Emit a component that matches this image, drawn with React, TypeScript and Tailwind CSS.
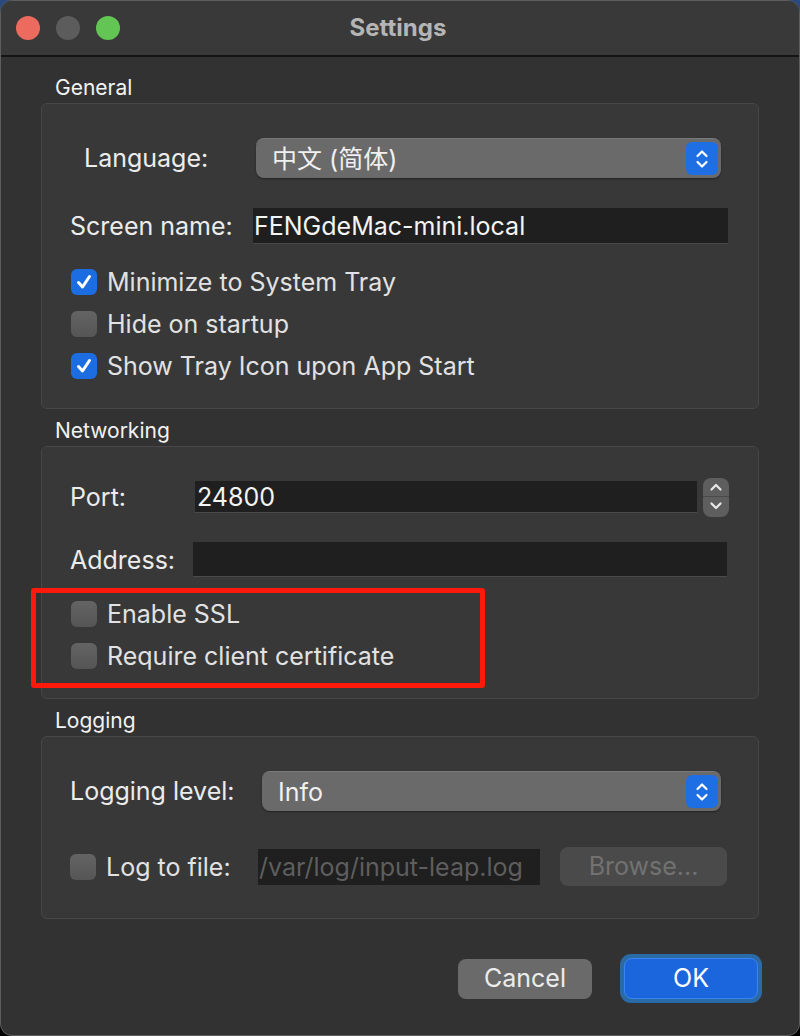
import React from "react";

const font = { fontFamily: 'Inter, "Noto Sans CJK SC", "Liberation Sans", sans-serif' };

function Chevrons({ color = "white" }: { color?: string }) {
  return (
    <svg width="14" height="22" viewBox="0 0 14 22" fill="none">
      <polyline points="2.5,8 7,3.5 11.5,8" stroke={color} strokeWidth="2.2" strokeLinecap="round" strokeLinejoin="round" />
      <polyline points="2.5,14 7,18.5 11.5,14" stroke={color} strokeWidth="2.2" strokeLinecap="round" strokeLinejoin="round" />
    </svg>
  );
}

function Select({ value, width }: { value: string; width: string }) {
  return (
    <div className={`${width} h-[40px] rounded-[8px] bg-[#6a6a6a] border-t border-[#7a7a7a] shadow-[0_1px_2px_rgba(0,0,0,0.4)] flex items-center justify-between pl-[16px] pr-[3px]`}>
      <span className="text-[25px] text-[#f0f0f0] pt-[2px]">{value}</span>
      <div className="w-[32px] h-[33px] rounded-[6px] bg-[#1e6fe3] flex items-center justify-center">
        <Chevrons />
      </div>
    </div>
  );
}

function Check({ checked }: { checked?: boolean }) {
  return checked ? (
    <div className="w-[26px] h-[26px] rounded-[6px] bg-[#1d6de2] flex items-center justify-center shrink-0">
      <svg width="18" height="18" viewBox="0 0 18 18" fill="none">
        <polyline points="3.5,9.5 7.5,14 14.5,3.5" stroke="white" strokeWidth="3" strokeLinecap="round" strokeLinejoin="round" />
      </svg>
    </div>
  ) : (
    <div className="w-[26px] h-[26px] rounded-[6px] bg-gradient-to-b from-[#646464] to-[#555555] shrink-0" />
  );
}

function CheckRow({ label, checked }: { label: string; checked?: boolean }) {
  return (
    <div className="h-[42px] flex items-center gap-[10px] pl-[29px]">
      <Check checked={checked} />
      <span className="text-[25px] text-[#e2e2e2] pt-[2px]">{label}</span>
    </div>
  );
}

function GroupTitle({ children }: { children: React.ReactNode }) {
  return <div className="h-[30px] pl-[14px] flex items-center text-[21px] text-[#f2f2f2]">{children}</div>;
}

export default function App() {
  return (
    <div className="w-[800px] h-[1036px] bg-gradient-to-b from-[#2b4a82] via-[#101010] to-black" style={font}>
      <div className="w-full h-full rounded-[12px] border border-[#5e5e5e] overflow-hidden flex flex-col bg-[#323232]">
        {/* title bar */}
        <div className="h-[56px] shrink-0 bg-[#393939] border-b-2 border-[#141414] flex items-center">
          <div className="flex items-center gap-[16px] pl-[15px]">
            <div className="w-[24px] h-[24px] rounded-full bg-[#ec6b5e]" />
            <div className="w-[24px] h-[24px] rounded-full bg-[#5c5c5c]" />
            <div className="w-[24px] h-[24px] rounded-full bg-[#62c554]" />
          </div>
          <div className="flex-1 text-center pr-[123px] text-[24px] font-bold text-[#b5b5b5]">Settings</div>
        </div>

        {/* body */}
        <div className="flex-1 px-[40px] pt-[16px]">
          <GroupTitle>General</GroupTitle>
          <div className="h-[306px] rounded-[6px] border border-[#474747] bg-[#383838] pt-[34px]">
            <div className="flex items-center h-[40px]">
              <span className="w-[214px] pl-[42px] text-[25px] text-[#ececec] pt-[2px]">Language:</span>
              <Select value="中文 (简体)" width="w-[465px]" />
            </div>
            <div className="flex items-center h-[36px] mt-[30px]">
              <span className="w-[211px] pl-[28px] text-[25px] text-[#ececec] pt-[2px]">Screen name:</span>
              <div className="w-[475px] h-[36px] bg-[#1f1f1f] border-b border-[#4a4a4a] flex items-center pl-[1px] pt-[2px] text-[25px] text-[#f4f4f4]">
                FENGdeMac-mini.local
              </div>
            </div>
            <div className="mt-[17px]">
              <CheckRow label="Minimize to System Tray" checked />
              <CheckRow label="Hide on startup" />
              <CheckRow label="Show Tray Icon upon App Start" checked />
            </div>
          </div>

          <div className="mt-[7px]">
            <GroupTitle>Networking</GroupTitle>
          </div>
          <div className="relative h-[253px] rounded-[6px] border border-[#474747] bg-[#383838] pt-[30px]">
            <div className="flex items-center h-[40px]">
              <span className="w-[153px] pl-[28px] text-[25px] text-[#ececec] pt-[2px]">Port:</span>
              <div className="w-[502px] h-[32px] bg-[#1f1f1f] border-b border-[#4a4a4a] flex items-center pl-[2px] pt-[2px] text-[25px] text-[#f4f4f4]">
                24800
              </div>
              <div className="ml-[6px] w-[26px] h-[39px] rounded-[8px] bg-[#5e5e5e] flex flex-col items-center">
                <div className="h-[19px] w-full flex items-center justify-center border-b border-[#4a4a4a]">
                  <svg width="14" height="10" viewBox="0 0 14 10" fill="none"><polyline points="2.5,7.5 7,3 11.5,7.5" stroke="#e8e8e8" strokeWidth="2.2" strokeLinecap="round" strokeLinejoin="round" /></svg>
                </div>
                <div className="h-[19px] w-full flex items-center justify-center">
                  <svg width="14" height="10" viewBox="0 0 14 10" fill="none"><polyline points="2.5,2.5 7,7 11.5,2.5" stroke="#e8e8e8" strokeWidth="2.2" strokeLinecap="round" strokeLinejoin="round" /></svg>
                </div>
              </div>
            </div>
            <div className="flex items-center h-[35px] mt-[25px]">
              <span className="w-[151px] pl-[28px] text-[25px] text-[#ececec] pt-[2px]">Address:</span>
              <div className="w-[534px] h-[35px] bg-[#1f1f1f] border-b border-[#4a4a4a]" />
            </div>
            <div className="mt-[16px]">
              <CheckRow label="Enable SSL" />
              <CheckRow label="Require client certificate" />
            </div>
            <div className="absolute left-[-11px] top-[141px] w-[454px] h-[100px] border-[5px] border-[#fd1a0c] rounded-[3px] pointer-events-none" />
          </div>

          <div className="mt-[7px]">
            <GroupTitle>Logging</GroupTitle>
          </div>
          <div className="h-[183px] rounded-[6px] border border-[#474747] bg-[#383838] pt-[34px]">
            <div className="flex items-center h-[40px]">
              <span className="w-[220px] pl-[28px] text-[25px] text-[#ececec] pt-[2px]">Logging level:</span>
              <Select value="Info" width="w-[459px]" />
            </div>
            <div className="flex items-center mt-[36px] h-[39px]">
              <div className="w-[216px] pl-[28px] flex items-center gap-[10px]">
                <Check />
                <span className="text-[25px] text-[#e2e2e2] pt-[2px]">Log to file:</span>
              </div>
              <div className="w-[282px] h-[36px] bg-[#1f1f1f] flex items-center pl-[1px] pt-[2px] text-[25px] text-[#5e5e5e] overflow-hidden whitespace-nowrap">
                /var/log/input-leap.log
              </div>
              <div className="ml-[20px] w-[167px] h-[39px] rounded-[8px] bg-[#4a4a4a] flex items-center justify-center text-[25px] text-[#727272]">
                Browse...
              </div>
            </div>
          </div>

          <div className="flex justify-end items-center mt-[35px] gap-[28px]">
            <div className="w-[134px] h-[40px] rounded-[8px] bg-[#6a6a6a] flex items-center justify-center text-[25px] text-[#ececec]">
              Cancel
            </div>
            <div className="w-[142px] h-[49px] rounded-[11px] bg-[#2a6aa6] p-[4px] -mr-[3px]">
              <div className="w-full h-full rounded-[8px] bg-[#1c66dd] border border-[#3a86f0] flex items-center justify-center text-[25px] text-white">
                OK
              </div>
            </div>
          </div>
        </div>
      </div>
    </div>
  );
}
